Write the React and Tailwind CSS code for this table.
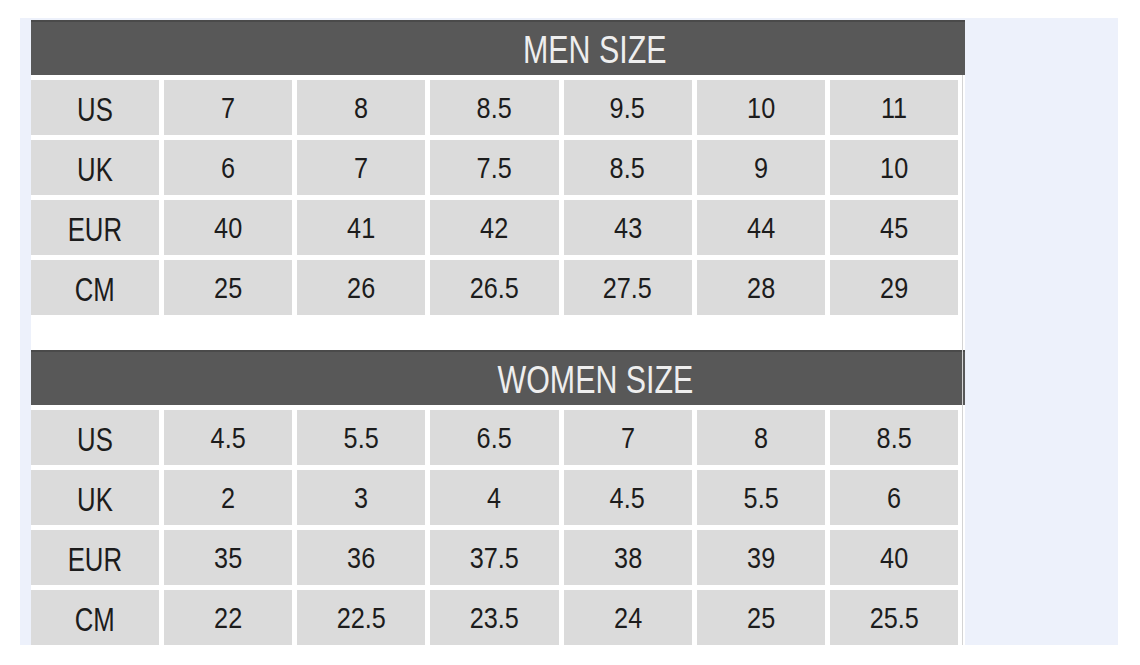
import React from 'react';

const men = [
  ['US', '7', '8', '8.5', '9.5', '10', '11'],
  ['UK', '6', '7', '7.5', '8.5', '9', '10'],
  ['EUR', '40', '41', '42', '43', '44', '45'],
  ['CM', '25', '26', '26.5', '27.5', '28', '29'],
];

const women = [
  ['US', '4.5', '5.5', '6.5', '7', '8', '8.5'],
  ['UK', '2', '3', '4', '4.5', '5.5', '6'],
  ['EUR', '35', '36', '37.5', '38', '39', '40'],
  ['CM', '22', '22.5', '23.5', '24', '25', '25.5'],
];

const font = { fontFamily: '"Liberation Sans", Arial, sans-serif' };

const SizeSection = ({ title, rows }) => (
  <div>
    <div className="h-[55px] bg-[#585858] border-t-2 border-[#4a4a4a] flex items-center justify-center pl-[194px]">
      <span className="inline-block scale-x-[0.8] text-[38px] leading-none text-[#eeeeee] pt-[2px]">{title}</span>
    </div>
    <div className="mt-[5px] w-[927px] grid grid-cols-7 gap-[5px]">
      {rows.map((row) =>
        row.map((cell, i) => (
          <div
            key={row[0] + i}
            className="h-[55px] bg-[#dbdbdb] flex items-center justify-center text-[#1c1c1c]"
          >
            {i === 0 ? (
              <span className="inline-block scale-x-[0.78] text-[33px] leading-none pt-[3px]">{cell}</span>
            ) : (
              <span className="inline-block scale-x-[0.87] text-[29px] leading-none pt-[1px]">{cell}</span>
            )}
          </div>
        ))
      )}
    </div>
  </div>
);

export default function App() {
  return (
    <div className="w-[1140px] h-[665px] bg-white pt-[18px] pl-[20px]" style={font}>
      <div className="w-[1098px] h-[627px] bg-[#edf1fb] pl-[11px] pt-[2px]">
        <div className="relative w-[934px] h-[625px] bg-white">
          <div className="absolute right-[2px] top-[55px] bottom-0 w-[1px] bg-[#d4d4d4]" />
          <SizeSection title="MEN SIZE" rows={men} />
          <div className="h-[35px]" />
          <SizeSection title="WOMEN SIZE" rows={women} />
        </div>
      </div>
    </div>
  );
}
